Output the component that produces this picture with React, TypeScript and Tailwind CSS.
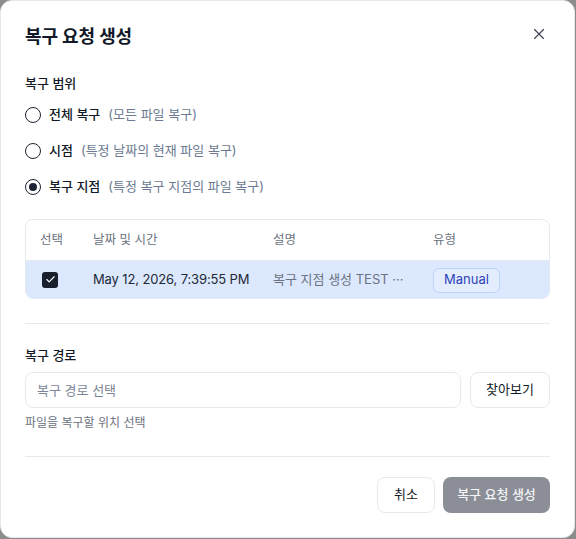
import { X, Check } from "lucide-react";

const SCOPES = [
  { label: "전체 복구", hint: "(모든 파일 복구)" },
  { label: "시점", hint: "(특정 날짜의 현재 파일 복구)" },
  { label: "복구 지점", hint: "(특정 복구 지점의 파일 복구)" },
];

function Radio({ checked }: { checked: boolean }) {
  return (
    <span className="flex h-4 w-4 items-center justify-center rounded-full border-[1.5px] border-[#1e2433]">
      {checked && <span className="h-2 w-2 rounded-full bg-[#1e2433]" />}
    </span>
  );
}

export default function App() {
  const selected = 2;

  return (
    <div
      className="h-[539px] w-[576px] bg-[#8c8c8c] text-[#111827]"
      style={{ fontFamily: "Inter, 'Noto Sans CJK KR', sans-serif" }}
    >
      <div className="relative flex h-[538px] w-[575px] flex-col rounded-xl border border-[#e5e7eb] bg-white px-6 pt-[22px]">
        <button className="absolute right-[26px] top-[24px] text-[#374151]">
          <X size={18} strokeWidth={1.5} />
        </button>

        <h2 className="text-[18px] font-semibold leading-[28px] tracking-[-0.01em]">복구 요청 생성</h2>

        {/* restore scope */}
        <div className="mt-[23px] text-[13px] font-medium leading-[18px]">복구 범위</div>
        <div className="mt-[15px] flex flex-col gap-[20px]">
          {SCOPES.map((s, i) => (
            <label key={s.label} className="flex h-4 items-center gap-2 text-[13px]">
              <Radio checked={i === selected} />
              <span className="font-medium">{s.label}</span>
              <span className="text-[#6b7a90]">{s.hint}</span>
            </label>
          ))}
        </div>

        {/* restore points */}
        <div className="mt-[24px] overflow-hidden rounded-lg border border-[#e5e9f0]">
          <div className="flex h-[40px] items-center text-[12.5px] text-[#6b7280]">
            <div className="w-[67px] pl-[14px]">선택</div>
            <div className="w-[180px]">날짜 및 시간</div>
            <div className="w-[160px]">설명</div>
            <div>유형</div>
          </div>
          <div className="flex h-[38px] items-center border-t border-[#e5e9f0] bg-[#dbe8fd]">
            <div className="w-[67px] pl-[16px]">
              <span className="flex h-4 w-4 items-center justify-center rounded-[3px] bg-[#1a1f2e] text-white">
                <Check size={11} strokeWidth={2.5} />
              </span>
            </div>
            <div className="w-[180px] text-[13px] tracking-[-0.01em] text-[#1f2937]">May 12, 2026, 7:39:55 PM</div>
            <div className="w-[160px] text-[13px] text-[#6b7280]">복구 지점 생성 TEST ···</div>
            <div>
              <span className="inline-flex h-[25px] items-center rounded-md border border-[#bfd3f7] bg-[#e3edfd] px-[10px] text-[13px] text-[#2f44b8]">
                Manual
              </span>
            </div>
          </div>
        </div>

        <div className="mt-[24px] h-px bg-[#e5e9f0]" />

        {/* restore path */}
        <div className="mt-[22px] text-[13px] font-medium leading-[18px]">복구 경로</div>
        <div className="mt-[8px] flex gap-[9px]">
          <input
            placeholder="복구 경로 선택"
            className="h-[36px] flex-1 rounded-lg border border-[#e5e9f0] px-[11px] text-[13px] placeholder:text-[#7c8595] outline-none"
          />
          <button className="h-[36px] w-[80px] rounded-lg border border-[#e5e9f0] text-[13px]">
            찾아보기
          </button>
        </div>
        <p className="mt-[7px] text-[12px] leading-[16px] text-[#6b7280]">파일을 복구할 위치 선택</p>

        <div className="mt-[25px] h-px bg-[#e5e9f0]" />

        <div className="mt-[20px] flex justify-end gap-2">
          <button className="h-[36px] w-[58px] rounded-lg border border-[#e5e9f0] text-[13px]">
            취소
          </button>
          <button className="h-[36px] w-[107px] rounded-lg bg-[#8b8e96] text-[13px] font-medium text-[#f3f4f6]">
            복구 요청 생성
          </button>
        </div>
      </div>
    </div>
  );
}
